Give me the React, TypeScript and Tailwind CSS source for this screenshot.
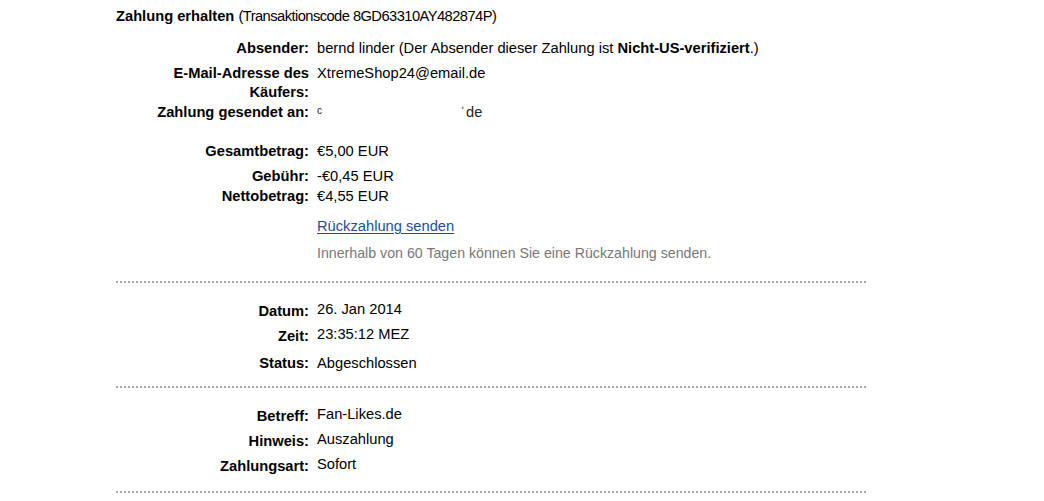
import React from "react";

type Row = {
  label: React.ReactNode;
  value: React.ReactNode;
  mt: string;
  drop?: boolean;
};

function Field({ label, value, mt, drop }: Row) {
  return (
    <div className={`flex items-start ${mt}`}>
      <div className={`w-[201px] shrink-0 pr-2 text-right font-bold ${drop ? "translate-y-[2px]" : ""}`}>
        {label}
      </div>
      <div className="h-[19px] whitespace-nowrap">{value}</div>
    </div>
  );
}

function Dotted({ mt }: { mt: string }) {
  return (
    <div
      className={`${mt} h-[2px] w-[750px] bg-[linear-gradient(to_right,#a8a8a8_50%,transparent_50%)] bg-[length:4px_2px]`}
    />
  );
}

export default function App() {
  return (
    <div className="min-h-[501px] w-[1044px] bg-white pl-[116px] pt-[7px] font-['Liberation_Sans',Arial,sans-serif] text-[14.7px] leading-[19px] text-black">
      <div className="whitespace-nowrap">
        <span className="font-bold">Zahlung erhalten</span>{" "}
        <span className="tracking-[-0.55px]">(Transaktionscode 8GD63310AY482874P)</span>
      </div>

      <Field
        mt="mt-[13px]"
        label="Absender:"
        value={
          <>
            bernd linder (Der Absender dieser Zahlung ist <span className="font-bold">Nicht-US-verifiziert</span>.)
          </>
        }
      />
      <div className="mt-[6px] flex items-start">
        <div className="w-[201px] shrink-0 pr-2 text-right font-bold">
          E-Mail-Adresse des
          <br />
          Käufers:
        </div>
        <div>XtremeShop24@email.de</div>
      </div>
      <Field
        mt="mt-[1px]"
        label="Zahlung gesendet an:"
        value={
          <div className="flex text-[#222]">
            <span>ᶜ</span>
            <span className="ml-[138px]">ˈ</span>
            <span className="ml-[1px]">de</span>
          </div>
        }
      />

      <Field mt="mt-[20px]" label="Gesamtbetrag:" value="€5,00 EUR" />
      <Field mt="mt-[6px]" label="Gebühr:" value="-€0,45 EUR" />
      <Field mt="mt-[1px]" label="Nettobetrag:" value="€4,55 EUR" />

      <div className="mt-[11px] pl-[201px]">
        <a href="#" className="text-[#1c4f8c] underline underline-offset-[2px]">
          Rückzahlung senden
        </a>
      </div>
      <div className="mt-[8px] pl-[201px] text-[14.2px] text-[#777777]">
        Innerhalb von 60 Tagen können Sie eine Rückzahlung senden.
      </div>

      <Dotted mt="mt-[18px]" />

      <Field mt="mt-[17px]" drop label="Datum:" value="26. Jan 2014" />
      <Field mt="mt-[6px]" drop label="Zeit:" value="23:35:12 MEZ" />
      <Field mt="mt-[10px]" label="Status:" value="Abgeschlossen" />

      <Dotted mt="mt-[13px]" />

      <Field mt="mt-[17px]" drop label="Betreff:" value="Fan-Likes.de" />
      <Field mt="mt-[6px]" drop label="Hinweis:" value="Auszahlung" />
      <Field mt="mt-[6px]" drop label="Zahlungsart:" value="Sofort" />

      <Dotted mt="mt-[17px]" />
    </div>
  );
}
